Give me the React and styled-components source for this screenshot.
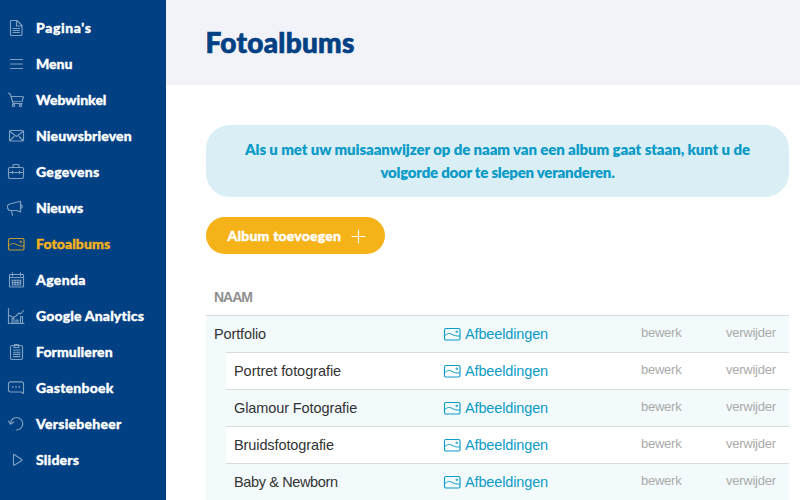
import React from 'react';
import styled, { createGlobalStyle } from 'styled-components';

const GlobalStyle = createGlobalStyle`
  *, *::before, *::after { box-sizing: border-box; }
  html, body { margin: 0; height: 500px; overflow: hidden; background: #fff; }
  body { font-family: "Liberation Sans", Arial, sans-serif; color: #333; }
`;

const Page = styled.div`
  display: flex;
  width: 800px;
  height: 500px;
  overflow: hidden;
`;

const Sidebar = styled.nav`
  flex: 0 0 166px;
  padding-top: 10px;
  background: #004083;
`;

const MenuItem = styled.a`
  display: flex;
  align-items: center;
  gap: 11px;
  height: 36px;
  padding-left: 7px;
  color: ${(p) => (p.$active ? '#f6b319' : '#fff')};
  cursor: pointer;
`;

const Glyph = styled.svg`
  flex: none;
  display: block;
  width: 18px;
  height: 18px;
  fill: none;
  stroke: currentColor;
  stroke-width: 1.15;
  stroke-linecap: round;
  stroke-linejoin: round;
  opacity: ${(p) => p.$opacity || 1};
`;

const MenuLabel = styled.span`
  font: 900 14px/20px Lato, "Open Sans", sans-serif;
  letter-spacing: ${(p) => p.$tracking || 0}px;
  font-variant-ligatures: none;
  -webkit-text-stroke: 0.35px currentColor;
  white-space: nowrap;
`;

const Main = styled.main`
  flex: 1;
  min-width: 0;
`;

const Header = styled.header`
  display: flex;
  align-items: center;
  height: 85px;
  padding: 0 0 2px 39.5px;
  background: #f2f3f8;
`;

const Title = styled.h1`
  margin: 0;
  font: 900 28px/34px Lato, "Open Sans", sans-serif;
  letter-spacing: 0.28px;
  -webkit-text-stroke: 0.7px currentColor;
  color: #004083;
`;

const Content = styled.section`
  display: flex;
  flex-direction: column;
  align-items: flex-start;
  padding: 40px 11px 0 40px;
`;

const Notice = styled.p`
  width: 100%;
  height: 72px;
  margin: 0;
  padding: 13px 0;
  border-radius: 24px;
  background: #daeef6;
  color: #0a9bc6;
  text-align: center;
`;

const NoticeLine = styled.span`
  display: block;
  font: 800 15px/23px Lato, "Open Sans", sans-serif;
  letter-spacing: ${(p) => p.$tracking || 0}px;
  white-space: nowrap;
`;

const AddButton = styled.button`
  display: flex;
  align-items: center;
  gap: 8px;
  width: 179px;
  height: 37px;
  margin: 20px 0 0;
  padding: 0 0 0 21.5px;
  border: 0;
  border-radius: 18.5px;
  background: #f6b319;
  color: #fff;
`;

const Table = styled.div`
  width: 100%;
  margin-top: 25px;
`;

const TableHead = styled.div`
  height: 36px;
  padding: 8px 8px 0;
  font-size: 14px;
  line-height: 20px;
  font-weight: 700;
  letter-spacing: -1px;
  color: #8e8e8e;
`;

const Nested = styled.div`
  padding-left: 20px;
  background: #f2fafc;
`;

const Row = styled.div`
  display: grid;
  grid-template-columns: 1fr 198px 85px 63px;
  height: 37px;
  padding-left: 8px;
  border-top: 1px solid #dadbdd;
  background: ${(p) => (p.$shaded ? '#f2fafc' : '#fff')};
  line-height: 36px;
`;

const Name = styled.span`
  font-size: 14.5px;
  letter-spacing: ${(p) => p.$tracking || 0}px;
  color: #333;
`;

const ImagesLink = styled.a`
  display: flex;
  align-items: center;
  gap: 4px;
  font-size: 14.5px;
  letter-spacing: -0.14px;
  color: #0a9bc6;
`;

const Action = styled.a`
  font-size: 13px;
  line-height: 33px;
  letter-spacing: -0.25px;
  color: #aaa;
`;

const icons = {
  page: (
    <path d="M4 1.5h6l5 5v9a1 1 0 0 1-1 1H4.5a1 1 0 0 1-1-1V2.5a1 1 0 0 1 1-1M9.5 1.5V7H15M6 9.5h6.5M6 11.5h6.5M6 13.5h6.5" />
  ),
  menu: <path d="M3.5 4.5h12M3.5 9h12M3.5 13.5h12" />,
  cart: (
    <>
      <path d="M1.5 2l2 1.5 2.5 9h9M3.8 5.2 16.5 5.7 15 10.5 5.5 10.8" />
      <circle cx="6.5" cy="14.5" r="1.2" />
      <circle cx="13.5" cy="14.5" r="1.2" />
    </>
  ),
  mail: (
    <>
      <rect x="2.5" y="3.5" width="14" height="10.5" rx="1" />
      <path d="M3 4.5l6.5 5L16 4.5M3 13.5l4-4M16 13.5l-4-4" />
    </>
  ),
  briefcase: (
    <>
      <rect x="1.5" y="4.5" width="15" height="11" rx="1.5" />
      <path d="M6 4.5v-2a1 1 0 0 1 1-1h4a1 1 0 0 1 1 1v2M2 9.5h14M5.5 8v2.5M12.5 8v2.5" />
    </>
  ),
  megaphone: (
    <path d="M13.5 2.2v10.8L9.5 11.5H4A3 3 0 0 1 3.5 4.8L13.5 2.2M13.5 5.5c2.3.3 2.3 3.7 0 4M4.5 11.5l1 4.8" />
  ),
  picture: (
    <>
      <rect x="1.5" y="3.5" width="15.5" height="11.5" rx="1.5" />
      <path d="M2 10.5C4.5 8 6.5 8 9 9.3S13 11.2 16.5 11" strokeWidth="1" />
      <circle cx="13.7" cy="6.8" r="0.8" strokeWidth="0.9" />
    </>
  ),
  calendar: (
    <>
      <rect x="2.5" y="3.5" width="14" height="12.5" rx="0.5" />
      <path d="M2.5 6.5h14M5.5 1.8v3M13.5 1.8v3M5.5 9v5M8.2 9v5M10.8 9v5M13.5 9v5M5 9.2h9M5 11.6h9M5 14h9" />
    </>
  ),
  chart: (
    <path d="M1.5 1.5v15h15.5M2.5 8.5l4 2 2.5-1.5L12 6l1.5 1L16.5 3.5M5 16v-4.5h2V16M9 16v-3h2v3M13.5 16V9.5h2V16" />
  ),
  clipboard: (
    <>
      <rect x="3.5" y="2.5" width="12" height="14" rx="1.5" />
      <path d="M7.5 2.5v-1h4v1l.5 2H7l.5-2M6.5 7h6.5M6.5 9.2h6.5M6.5 11.4h6.5M6.5 13.6h6.5" />
    </>
  ),
  chat: (
    <>
      <path d="M3.5 2.8h11a2 2 0 0 1 2 2V14.5l-2.3-1.5H3.5a2 2 0 0 1-2-2V4.8a2 2 0 0 1 2-2z" />
      <path d="M5.5 8h.6M8.8 8h.6M12 8h.6" strokeWidth="1.4" />
    </>
  ),
  undo: <path d="M1.5 6l2 3.2L6.8 7M3.5 9C3.5 5 6.2 2.5 9.5 2.5A6.2 6.2 0 0 1 9.5 15" />,
  play: <path d="M6.5 4v9.8q0 .7.7.4l7.6-4.6q.6-.5 0-1L7.2 3.6q-.7-.3-.7.4z" />,
  plus: <path d="M9.5 3v13M3 9.5h13" />,
};

const Icon = ({ name, ...rest }) => (
  <Glyph viewBox="0 0 18 18" aria-hidden="true" {...rest}>
    {icons[name]}
  </Glyph>
);

const menu = [
  { icon: 'page', label: "Pagina's", tracking: 0.6 },
  { icon: 'menu', label: 'Menu', tracking: 0 },
  { icon: 'cart', label: 'Webwinkel', tracking: -0.02 },
  { icon: 'mail', label: 'Nieuwsbrieven', tracking: 0.12 },
  { icon: 'briefcase', label: 'Gegevens', tracking: 0.3 },
  { icon: 'megaphone', label: 'Nieuws', tracking: 0 },
  { icon: 'picture', label: 'Fotoalbums', tracking: 0.1, active: true },
  { icon: 'calendar', label: 'Agenda', tracking: 0.35 },
  { icon: 'chart', label: 'Google Analytics', tracking: 0.17 },
  { icon: 'clipboard', label: 'Formulieren', tracking: 0.1 },
  { icon: 'chat', label: 'Gastenboek', tracking: 0.22 },
  { icon: 'undo', label: 'Versiebeheer', tracking: 0.25 },
  { icon: 'play', label: 'Sliders', tracking: 0.2 },
];

const albums = [
  { name: 'Portret fotografie', tracking: -0.05 },
  { name: 'Glamour Fotografie', tracking: -0.1 },
  { name: 'Bruidsfotografie', tracking: -0.1 },
  { name: 'Baby & Newborn', tracking: -0.37 },
];

const AlbumRow = ({ name, tracking, shaded }) => (
  <Row $shaded={shaded}>
    <Name $tracking={tracking}>{name}</Name>
    <ImagesLink>
      <Icon name="picture" />
      Afbeeldingen
    </ImagesLink>
    <Action>bewerk</Action>
    <Action>verwijder</Action>
  </Row>
);

export default function App() {
  return (
    <Page>
      <GlobalStyle />
      <Sidebar>
        {menu.map((m) => (
          <MenuItem key={m.label} $active={m.active}>
            <Icon name={m.icon} $opacity={m.active ? 0.8 : 0.5} />
            <MenuLabel $tracking={m.tracking}>{m.label}</MenuLabel>
          </MenuItem>
        ))}
      </Sidebar>
      <Main>
        <Header>
          <Title>Fotoalbums</Title>
        </Header>
        <Content>
          <Notice>
            <NoticeLine $tracking={-0.1}>Als u met uw muisaanwijzer op de naam van een album gaat staan, kunt u de</NoticeLine>
            <NoticeLine $tracking={-0.24}>volgorde door te slepen veranderen.</NoticeLine>
          </Notice>
          <AddButton>
            <MenuLabel $tracking={0.2}>Album toevoegen</MenuLabel>
            <Icon name="plus" />
          </AddButton>
          <Table>
            <TableHead>NAAM</TableHead>
            <AlbumRow name="Portfolio" tracking={-0.13} shaded />
            <Nested>
              {albums.map((album, i) => (
                <AlbumRow key={album.name} {...album} shaded={i % 2 === 1} />
              ))}
            </Nested>
          </Table>
        </Content>
      </Main>
    </Page>
  );
}
